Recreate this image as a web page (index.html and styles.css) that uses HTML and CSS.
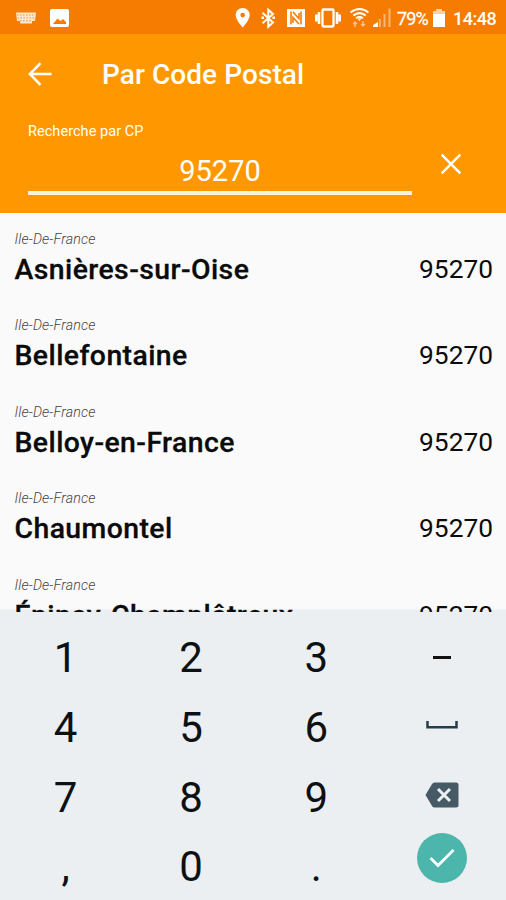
FILE: index.html
```html
<!DOCTYPE html>
<html lang="fr">
<head>
<meta charset="utf-8">
<title>Par Code Postal</title>
<link rel="stylesheet" href="styles.css">
</head>
<body>
<div class="screen">
  <div class="status">
    <svg class="status-left" width="80" height="34" viewBox="0 0 80 34" fill="#fff">
      <path d="M16 12.5h20l-1 8.5h-3v2.500H20V21h-3z" opacity=".82"/>
      <path d="M17 15h18M17.500 18h17M20 20.800h12" stroke="#f57c00" stroke-width=".8" stroke-dasharray="1.500 1.500"/>
      <path fill-rule="evenodd" d="M52 9h15q2 0 2 2v14q0 2-2 2H52q-2 0-2-2V11q0-2 2-2zM53 24h13v-2l-3-3-2.500 2-3-2.500z"/>
    </svg>
    <svg class="status-icons" width="176" height="34" viewBox="220 0 176 34" fill="none" stroke="#fff">
      <path fill="#fff" stroke="none" fill-rule="evenodd" d="M242.700 8c-4 0-7 3-7 7 0 5 7 12.500 7 12.500s7-7.500 7-12.500c0-4-3-7-7-7zm0 4.800a2.300 2.300 0 1 1 0 4.600 2.300 2.300 0 0 1 0-4.600z"/>
      <path stroke-width="2" d="M262.500 12.800l10.500 9.700-4.700 4.300v-17l4.700 4.200-10.500 9.200"/>
      <path stroke="none" fill="#fff" d="M261.500 16.500h2.500v2.500h-2.500zM272.500 16.500h2.500v2.500h-2.500z"/>
      <path fill="#fff" stroke="none" d="M287 9h18v18h-18z"/>
      <path stroke="#f57c00" stroke-width="1.600" d="M291 24.500v-13M293 12l6 6.500V13M301 11.500v13M299 24l-6-6.500V23"/>
      <rect x="322.500" y="9.500" width="11" height="17" rx="1" stroke-width="2.300"/>
      <path stroke-width="2.600" d="M319 12v12M337 12v12M316.300 14.500v7M339.700 14.500v7"/>
      <path stroke-width="2" d="M350.500 12.500q9-7 18 0M353.300 15.500q6.200-4.800 12.400 0M356 18.300q3.500-2.500 7 0"/>
      <path fill="#fff" stroke="none" d="M357.500 18.500h4l-2 2.500z"/>
      <path opacity=".55" stroke-width="1.400" d="M355 27v-5m-2 2 2-2 2 2M363 21v5m-2-2 2 2 2-2"/>
      <path fill="#fff" stroke="none" d="M373 27v-2l5-3v5z"/>
      <path opacity=".45" stroke-width="2" d="M379.800 27v-8M384.500 27V14M389.500 27V8.500"/>
    </svg>
    <span class="battery-text">79%</span>
    <svg class="battery" width="14" height="19" viewBox="0 0 14 19" fill="#fff"><path opacity=".65" d="M4 0h6v2h3v4H1V2h3z"/><path d="M1 5h12v13H1z"/></svg>
    <span class="clock">14:48</span>
  </div>
  <header class="header">
    <div class="titlebar">
      <svg class="back" width="24" height="24" viewBox="0 0 24 24" fill="none" stroke="#fff" stroke-width="2.500"><path d="M12.500 1.200 1.900 12l10.600 10.800M2 12h21.500"/></svg>
      <h1 class="title">Par Code Postal</h1>
    </div>
    <div class="search">
      <div class="field">
        <div class="label">Recherche par CP</div>
        <div class="value">95270</div>
      </div>
      <svg class="clear" width="22" height="22" viewBox="0 0 22 22" stroke="#fff" stroke-width="2.500"><path d="m1.700 1.700 18.600 18.600M20.300 1.700 1.700 20.300"/></svg>
    </div>
  </header>
  <main class="list">
    <div class="item"><div class="region">Ile-De-France</div><div class="line"><span class="name">Asnières-sur-Oise</span><span class="code">95270</span></div></div>
    <div class="item"><div class="region">Ile-De-France</div><div class="line"><span class="name">Bellefontaine</span><span class="code">95270</span></div></div>
    <div class="item"><div class="region">Ile-De-France</div><div class="line"><span class="name">Belloy-en-France</span><span class="code">95270</span></div></div>
    <div class="item"><div class="region">Ile-De-France</div><div class="line"><span class="name">Chaumontel</span><span class="code">95270</span></div></div>
    <div class="item"><div class="region">Ile-De-France</div><div class="line"><span class="name">Épinay-Champlâtreux</span><span class="code">95270</span></div></div>
  </main>
  <div class="keypad">
    <div class="key">1</div><div class="key">2</div><div class="key">3</div>
    <div class="key"><svg width="20" height="6" viewBox="0 0 20 6"><path d="M1 1h18v3H1z" fill="#111"/></svg></div>
    <div class="key">4</div><div class="key">5</div><div class="key">6</div>
    <div class="key"><svg class="space" width="32" height="8" viewBox="0 0 32 8"><path d="M1.500 0v6.300h29V0" fill="none" stroke="#263d49" stroke-width="2.500"/></svg></div>
    <div class="key">7</div><div class="key">8</div><div class="key">9</div>
    <div class="key"><svg class="delete" width="34" height="26" viewBox="0 0 34 26"><path d="M9.500.5H31q2.500 0 2.500 2.500v20q0 2.500-2.500 2.500H9.500Q8 25.500 7 24L.5 13 7 2Q8 .5 9.500.5z" fill="#455a64"/><path d="m13 7 12 12M25 7 13 19" stroke="#eceff1" stroke-width="3"/></svg></div>
    <div class="key">,</div><div class="key">0</div><div class="key">.</div>
    <div class="key"><span class="enter"><svg width="26" height="20" viewBox="0 0 26 20"><path d="m1.500 10 7.500 7.500L24.500 2" fill="none" stroke="#fff" stroke-width="2.700"/></svg></span></div>
  </div>
</div>
</body>
</html>
```
FILE: styles.css
```css
* { box-sizing: border-box; }
body { margin: 0; font-family: Roboto, "Liberation Sans", sans-serif; }
svg { display: block; flex: none; }
.screen { width: 506px; height: 900px; overflow: hidden; display: flex; flex-direction: column; background: #eceff1; }
.status { height: 34px; flex: none; display: flex; background: #f57c00; color: #fff; }
.status-icons { margin-left: 140px; }
.battery-text { width: 36px; margin-left: 1px; font-size: 18px; line-height: 37px; letter-spacing: -.9px; -webkit-text-stroke: .3px #fff; }
.battery { margin: 9px 6px 0 -1px; }
.clock { font-size: 18px; line-height: 37px; font-weight: 500; letter-spacing: -.5px; margin-left: 1px; white-space: nowrap; }
.header { height: 179px; flex: none; background: #ff9800; color: #fff; }
.titlebar { display: flex; align-items: center; height: 80px; padding-left: 28px; }
.title { margin: 2px 0 0 50px; font-size: 28px; line-height: 34px; font-weight: 500; letter-spacing: .07px; white-space: nowrap; }
.search { display: flex; padding-left: 28px; }
.field { width: 384px; height: 81px; border-bottom: 4px solid #fff3e0; }
.label { padding-top: 9px; font-size: 14.500px; line-height: 18px; letter-spacing: .05px; }
.value { padding-top: 13px; font-size: 29px; line-height: 34px; text-align: center; }
.clear { margin: 39px 0 0 27.500px; }
.list { height: 399px; flex: none; overflow: hidden; padding: 15px 13px 0 14.500px; background: linear-gradient(#fafafa 396px, #eceff1 397px); }
.item { height: 86.400px; }
.region { height: 21px; font-size: 14.200px; line-height: 22px; letter-spacing: .15px; font-style: italic; font-weight: 300; color: #444; }
.line { display: flex; justify-content: space-between; line-height: 41px; color: #0b0b0b; }
.name { font-size: 28.400px; font-weight: 500; letter-spacing: .42px; white-space: nowrap; -webkit-text-stroke: .3px #0b0b0b; }
.code { font-size: 26.300px; }
.keypad { height: 288px; flex: none; display: grid; grid-template-columns: repeat(4, 125.300px); grid-auto-rows: 69.800px; padding: 11px 0 0 3px; }
.key { display: flex; align-items: center; justify-content: center; font-size: 42px; line-height: 69.800px; color: #0c1114; }
.space { margin-top: -5px; }
.delete { margin-top: -4px; }
.enter { width: 50px; height: 50px; margin-top: -18px; border-radius: 50%; background: #4db6ac; display: flex; align-items: center; justify-content: center; }
```
